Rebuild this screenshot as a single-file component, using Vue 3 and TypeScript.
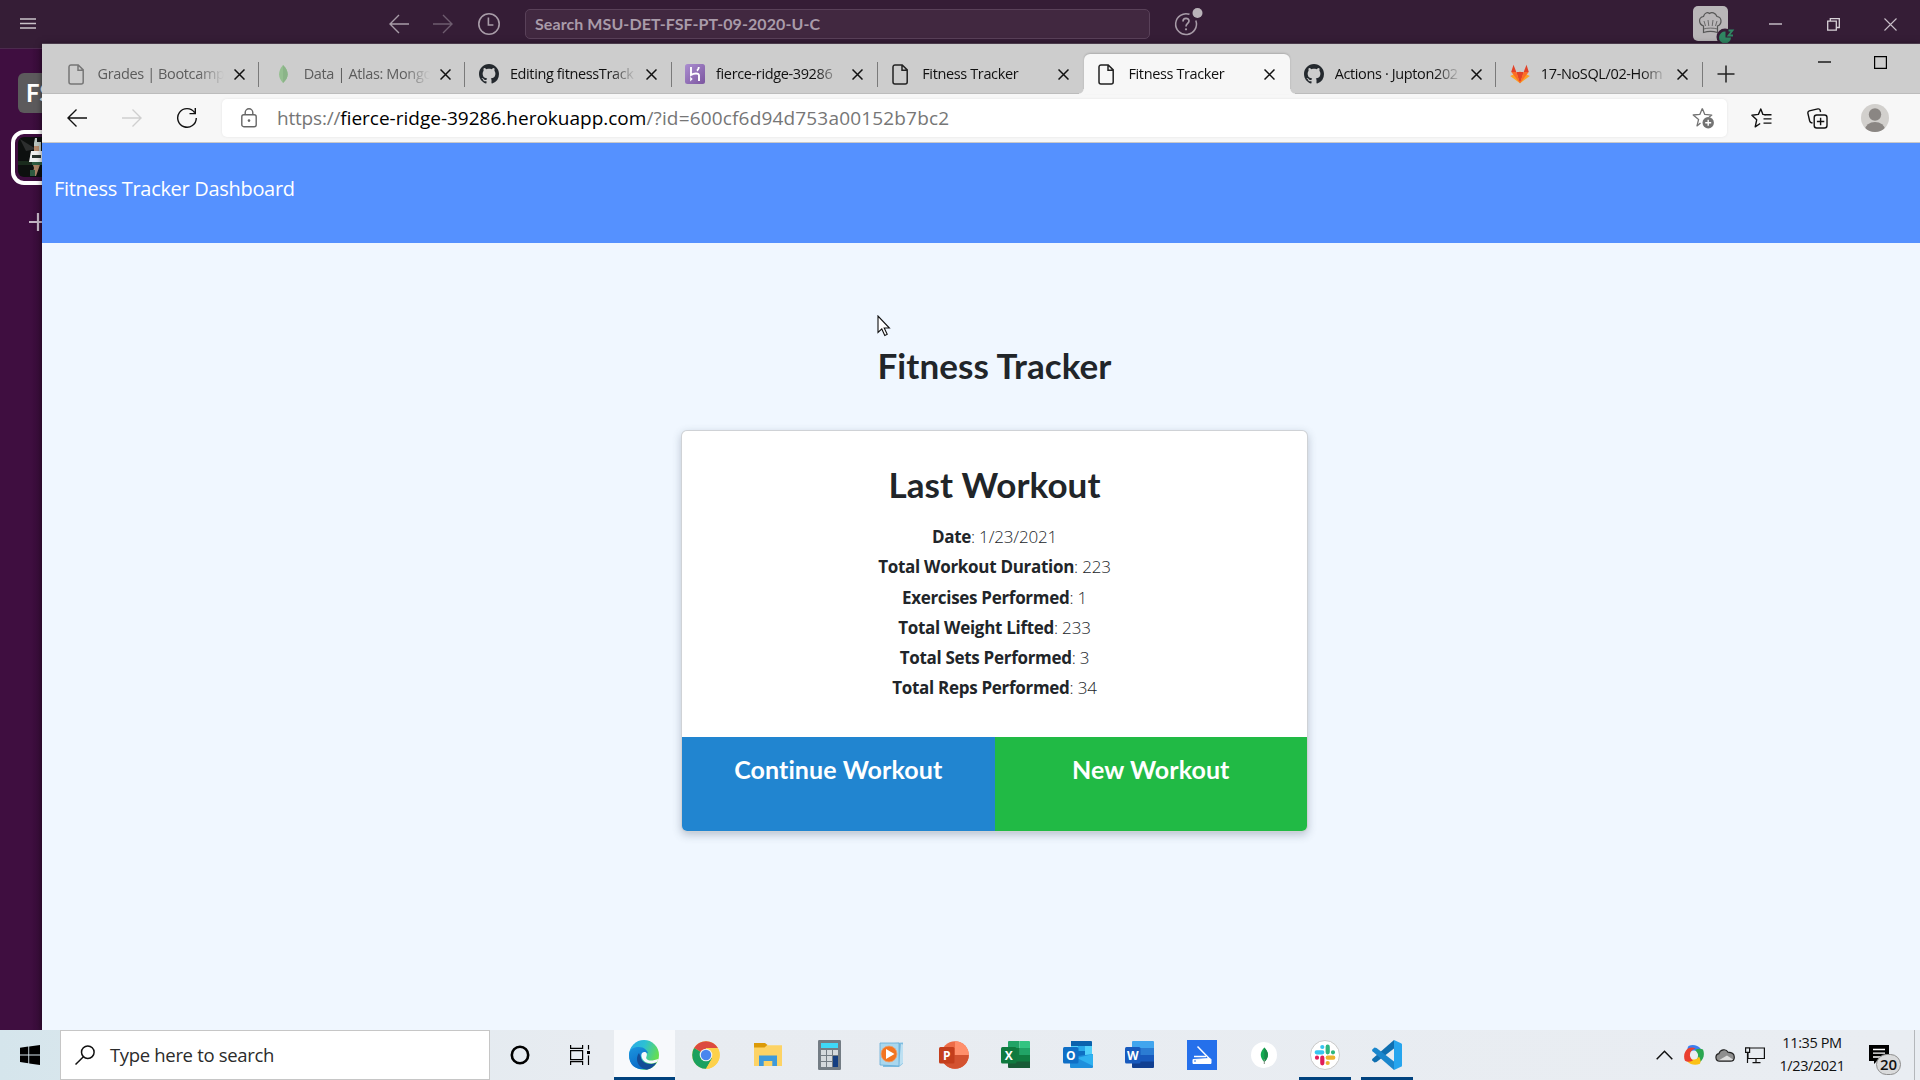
<script setup lang="ts">
interface Tab {
  title: string
  icon: 'page' | 'leaf' | 'github' | 'heroku' | 'gitlab'
  active?: boolean
  faded?: boolean
  noSep?: boolean
}

const tabs: Tab[] = [
  { title: 'Grades | Bootcamp', icon: 'page', faded: true },
  { title: 'Data | Atlas: Mongo', icon: 'leaf', faded: true },
  { title: 'Editing fitnessTrack', icon: 'github' },
  { title: 'fierce-ridge-39286', icon: 'heroku' },
  { title: 'Fitness Tracker', icon: 'page', noSep: true },
  { title: 'Fitness Tracker', icon: 'page', active: true, noSep: true },
  { title: 'Actions · Jupton202', icon: 'github' },
  { title: '17-NoSQL/02-Hom', icon: 'gitlab' },
]

const stats: [string, string][] = [
  ['Date', '1/23/2021'],
  ['Total Workout Duration', '223'],
  ['Exercises Performed', '1'],
  ['Total Weight Lifted', '233'],
  ['Total Sets Performed', '3'],
  ['Total Reps Performed', '34'],
]
</script>

<template>
  <div class="desktop">
    <!-- Slack window behind the browser -->
    <div class="slack">
      <header class="slack-bar">
        <svg class="burger" width="16" height="12" viewBox="0 0 16 12"><path d="M0 1h16M0 5.5h16M0 10h16" stroke="#c9c2c9" stroke-width="1.3" /></svg>
        <svg class="s-back" width="20" height="20" viewBox="0 0 20 20" fill="none" stroke="#a89ca8" stroke-width="1.4"><path d="M20 10H1M10 1L1 10l9 9" /></svg>
        <svg class="s-fwd" width="20" height="20" viewBox="0 0 20 20" fill="none" stroke="#6e5c6f" stroke-width="1.4"><path d="M0 10h19M10 1l9 9-9 9" /></svg>
        <svg class="s-clock" width="24" height="24" viewBox="0 0 24 24" fill="none" stroke="#a89ca8" stroke-width="1.6"><circle cx="12" cy="12" r="10.2" /><path d="M11.4 5.6V13h5" /></svg>
        <div class="s-search">Search MSU-DET-FSF-PT-09-2020-U-C</div>
        <svg class="s-help" width="32" height="32" viewBox="0 0 32 32" fill="none" stroke="#a89ca8" stroke-width="1.5">
          <path d="M15.500 8.300A10.400 10.400 0 1 0 21.800 14.500" />
          <path d="M9 15.400c0-4 6-4 6-.3 0 2.400-3 2.300-3 5.300" stroke-width="1.700" />
          <circle cx="12" cy="23.300" r="1.100" fill="#a89ca8" stroke="none" />
          <circle cx="23.500" cy="7" r="5" fill="#b9b3b9" stroke="none" />
        </svg>
        <div class="s-avatar">
          <svg width="44" height="40" viewBox="0 0 44 40">
            <g fill="none" stroke="#555" stroke-width="1.200" transform="translate(-.5 -3.500)">
              <path d="M11 23.500C6 21.500 5.500 15 11 14c1-4 4-4.500 6-3 2-1.500 6-1 7.500 3 5 .6 5.500 7.500 .5 9.500v6.500c-4-1.200-10-1.200-14 0z" />
              <path d="M11 26.500c4-1.200 10-1.200 14 0M15.500 17.500l.8 6M20.500 17.500l-.8 6M11.500 18.500l1.500 5M24.500 18.500l-1.500 5" stroke-width=".8" />
            </g>
            <circle cx="32" cy="31" r="8.500" fill="#351d36" />
            <path d="M32.500 25.500a6 6 0 1 0 5.500 6h-5.500z" fill="#2f8662" />
            <path d="M35.500 24.500h4l-4 5h4.500" fill="none" stroke="#2f8662" stroke-width="1.800" />
          </svg>
        </div>
        <svg class="s-min" width="13" height="2"><path d="M0 1h13" stroke="#d8d2d8" stroke-width="1.300" /></svg>
        <svg class="s-max" width="13" height="13" viewBox="0 0 13 13" fill="none" stroke="#d8d2d8" stroke-width="1.300"><path d="M.7 3.200h8.600v9H.7zM3.300 3V.7h9v8.800h-3" /></svg>
        <svg class="s-close" width="13" height="13" viewBox="0 0 13 13"><path d="M.5.5l12 12M12.500.5l-12 12" stroke="#c9bfc9" stroke-width="1.100" /></svg>
      </header>
      <aside class="slack-rail">
        <div class="ws">FS</div>
        <div class="ws-photo">
          <svg width="40" height="40" viewBox="0 0 40 40">
            <rect width="40" height="40" fill="#0d100f" />
            <path d="M2 2l16 10L8 14z" fill="#2c2e2e" />
            <path d="M0 24h40v4H0z" fill="#1a2b1d" />
            <path d="M17 1h2v4h4v9h-7V6z" fill="#b9c4bf" />
            <path d="M16 9h5v5h-5z" fill="#b48a6b" />
            <path d="M13 14h15v11H11z" fill="#f0f1f0" />
            <path d="M14 18h9v3h-9z" fill="#27332e" />
            <path d="M14 25h9l-5 14h-4l2-8z" fill="#a98365" />
            <path d="M14 25h10v3H14zM12 33h5v6h-5z" fill="#2f5c41" />
          </svg>
        </div>
        <svg class="ws-add" width="18" height="18" viewBox="0 0 18 18"><path d="M9 0v18M0 9h18" stroke="#c4b5c5" stroke-width="2.200" /></svg>
      </aside>
    </div>

    <!-- Browser window -->
    <div class="browser">
      <div class="tabstrip">
        <div v-for="(t, i) in tabs" :key="i" class="tab" :class="{ active: t.active, faded: t.faded, sep: !t.noSep }">
          <div class="tab-icon">
            <svg v-if="t.icon === 'page'" width="20" height="21" viewBox="0 0 20 21" fill="none" stroke="#222" stroke-width="1.500"><path d="M4 .9h7.200l5 5V18a2 2 0 0 1-2 2H4a2 2 0 0 1-2-2V2.900a2 2 0 0 1 2-2zM11 1v5.200h5.200" /></svg>
            <svg v-else-if="t.icon === 'leaf'" width="20" height="20" viewBox="0 0 20 20"><path d="M10 1c6 6 6.500 12 0 18C4.500 13 5 7 10 1z" fill="#5fb357" /><path d="M10 1c6 6 6.500 12 0 18z" fill="#4b9c45" /></svg>
            <svg v-else-if="t.icon === 'github'" width="20" height="20" viewBox="0 0 16 16"><path fill="#24292e" d="M8 0C3.580 0 0 3.580 0 8c0 3.540 2.290 6.530 5.470 7.590.4.070.55-.17.55-.38 0-.19-.01-.82-.01-1.490-2.010.37-2.530-.49-2.690-.94-.09-.23-.48-.94-.82-1.130-.28-.15-.68-.52-.01-.53.63-.01 1.080.58 1.230.82.72 1.210 1.870.87 2.330.66.070-.52.28-.87.51-1.070-1.780-.2-3.640-.89-3.640-3.950 0-.87.31-1.590.82-2.150-.08-.2-.36-1.020.08-2.120 0 0 .67-.21 2.200.82.64-.18 1.320-.27 2-.27s1.360.09 2 .27c1.530-1.040 2.200-.82 2.200-.82.44 1.100.16 1.920.08 2.120.51.56.82 1.270.82 2.150 0 3.070-1.870 3.750-3.650 3.950.29.25.54.73.54 1.480 0 1.070-.01 1.930-.01 2.200 0 .21.15.46.55.38A8.010 8.010 0 0 0 16 8c0-4.420-3.580-8-8-8z" /></svg>
            <svg v-else-if="t.icon === 'heroku'" width="20" height="20" viewBox="0 0 20 20"><defs><linearGradient id="hk" x1="0" y1="0" x2="1" y2="1"><stop offset="0" stop-color="#ab8ed0" /><stop offset="1" stop-color="#7b559f" /></linearGradient></defs><rect width="20" height="20" rx="2.500" fill="url(#hk)" /><path d="M6 3v8c2.500-1.500 8-2.500 8 .5V17M13.800 3c0 1.600-.7 2.800-1.800 3.800" fill="none" stroke="#fff" stroke-width="1.900" /><path d="M5.200 12.800v4.600l2.500-2.300z" fill="#fff" /></svg>
            <svg v-else width="20" height="20" viewBox="0 0 20 20"><path d="M10 19.200L.2 12 10 7.500l9.800 4.500z" fill="#fca326" /><path d="M10 19.200L6.300 8h7.400z" fill="#e24329" /><path d="M10 19.200L1.300 8h5zM10 19.200L18.700 8h-5z" fill="#fc6d26" /><path d="M3.500.8L1.200 8h5.100zM16.500.8L18.800 8h-5.100z" fill="#e24329" /></svg>
          </div>
          <div class="tab-title">{{ t.title }}</div>
          <svg class="tab-x" width="11" height="11" viewBox="0 0 11 11"><path d="M.5.5l10 10M10.500.5l-10 10" stroke="#111" stroke-width="1.500" /></svg>
        </div>
        <svg class="newtab" width="18" height="18" viewBox="0 0 18 18"><path d="M9 .5v17M.5 9h17" stroke="#222" stroke-width="1.500" /></svg>
        <svg class="b-min" width="13" height="2"><path d="M0 1h13" stroke="#000" stroke-width="1.300" /></svg>
        <svg class="b-max" width="13" height="13"><path d="M.6.6h11.800v11.800H.6z" fill="none" stroke="#000" stroke-width="1.200" /></svg>
      </div>

      <div class="toolbar">
        <svg class="t-back" width="20" height="18" viewBox="0 0 20 18" fill="none" stroke="#111" stroke-width="1.400"><path d="M20 9H1M9.500.6L1 9l8.500 8.400" /></svg>
        <svg class="t-fwd" width="20" height="18" viewBox="0 0 20 18" fill="none" stroke="#cfcfcf" stroke-width="1.400"><path d="M0 9h19M10.500.6L19 9l-8.500 8.400" /></svg>
        <svg class="t-reload" width="22" height="22" viewBox="0 0 22 22" fill="none" stroke="#111" stroke-width="1.400"><path d="M18.600 5.600A9.300 9.300 0 1 0 20.300 11M19.300 1v5.600h-5.800" /></svg>
        <div class="urlbar">
          <svg width="16" height="20" viewBox="0 0 16 20" fill="none" stroke="#666" stroke-width="1.400"><rect x=".8" y="6.700" width="14.400" height="12" rx="2" /><path d="M4.200 6.500V4.600a3.800 3.800 0 0 1 7.600 0v1.900" /><circle cx="8" cy="12.600" r="1.300" fill="#666" stroke="none" /></svg>
          <div class="url"><span>https://</span><b>fierce-ridge-39286.herokuapp.com</b><i>/?id=600cf6d94d753a00152b7bc2</i></div>
          <svg class="addfav" width="23" height="22" viewBox="0 0 23 22"><path d="M10.300 1.200l2.500 5.900 7 .7-2.800 2.200M8.500 15.700L5 18.600l1.600-6.500L1.200 7.700l6.600-.6 2.500-5.900" transform="translate(0 .3)" fill="none" stroke="#737373" stroke-width="1.300" stroke-linejoin="round" /><circle cx="16.200" cy="15.700" r="5.700" fill="#737373" /><path d="M16.200 12.700v6M13.200 15.700h6" stroke="#fff" stroke-width="1.400" /></svg>
        </div>
        <svg class="t-fav" width="21" height="20" viewBox="0 0 21 20" fill="none" stroke="#111" stroke-width="1.400" stroke-linejoin="round"><path d="M14.500 6.700l-2.600-.3L9.800 1 7.400 6.400l-6.500.8 4.800 4.600-1.500 7 5-3.300" /><path d="M13.500 6.700H20.500M12.500 10.900h8M12.500 15.100h8" /></svg>
        <svg class="t-coll" width="21" height="21" viewBox="0 0 21 21" fill="none" stroke="#111" stroke-width="1.400"><rect x="7.200" y="7" width="12.800" height="13" rx="2.500" /><path d="M13.600 9.800v7.400M9.900 13.500h7.400M5.500 15l-1-.2C3.500 14.500 3 14 2.700 13L.9 5.300c-.2-1.200.3-2 1.400-2.400l8.600-2c1.200-.2 2 .3 2.300 1.400l.4 1.700" /></svg>
        <svg class="t-user" width="28" height="28" viewBox="0 0 28 28"><defs><clipPath id="uc"><circle cx="14" cy="14" r="14" /></clipPath></defs><g clip-path="url(#uc)"><rect width="28" height="28" fill="#d2d0cd" /><circle cx="14" cy="10.500" r="6.200" fill="#8a8683" /><ellipse cx="14" cy="26" rx="10" ry="8" fill="#8a8683" /></g></svg>
      </div>

      <div class="page">
        <nav class="nav">Fitness Tracker Dashboard</nav>
        <main>
          <h1>Fitness Tracker</h1>
          <section class="card">
            <div class="card-body">
              <h2>Last Workout</h2>
              <div v-for="s in stats" :key="s[0]" class="stat"><strong>{{ s[0] }}</strong>: {{ s[1] }}</div>
            </div>
            <div class="buttons">
              <a class="blue">Continue Workout</a>
              <a class="green">New Workout</a>
            </div>
          </section>
        </main>
      </div>
    </div>

    <svg class="cursor" width="14" height="22" viewBox="0 0 14 22"><path d="M1 1v16.500l3.800-3.600 3 6.500 2.400-1.100-3-6.300h5.200z" fill="#fff" stroke="#111" stroke-width="1.100" /></svg>

    <footer class="taskbar">
      <div class="start"><svg width="20" height="20" viewBox="0 0 20 20"><path d="M0 2.800l8.300-1.200v7.900H0zM9.200 1.500L20 0v9.500H9.200zM0 10.400h8.300v7.900L0 17.100zM9.200 10.400H20V20L9.200 18.400z" /></svg></div>
      <div class="search">
        <svg width="20" height="20" viewBox="0 0 20 20" fill="none" stroke="#111" stroke-width="1.500"><circle cx="12.800" cy="7.200" r="6.300" /><path d="M8.400 11.800L.5 19.500" /></svg>
        <span>Type here to search</span>
      </div>
      <svg class="cortana" width="20" height="20" viewBox="0 0 20 20"><circle cx="10" cy="10" r="8.200" fill="none" stroke="#000" stroke-width="2.600" /></svg>
      <svg class="taskview" width="20" height="20" viewBox="0 0 20 20" fill="none" stroke="#000" stroke-width="1.200"><path d="M.6 0v3.400h12V0M.6 20v-3.400h12V20M.6 5.600h12v9H.6zM18.500 0v4.500M18.500 10.500V20" /><path d="M17 6h3v3h-3z" fill="#000" stroke="none" /></svg>

      <div class="apps">
        <div class="app current">
          <svg width="30" height="30" viewBox="0 0 30 30">
            <defs>
              <linearGradient id="eg1" x1="0" y1="0" x2="1" y2=".4"><stop offset="0" stop-color="#2aa7ea" /><stop offset=".5" stop-color="#2cc0d4" /><stop offset="1" stop-color="#66de50" /></linearGradient>
              <linearGradient id="eg2" x1="0" y1="0" x2=".5" y2="1"><stop offset="0" stop-color="#1c96de" /><stop offset="1" stop-color="#0868c6" /></linearGradient>
            </defs>
            <circle cx="15" cy="15" r="15" fill="url(#eg1)" />
            <path d="M0 15C0 9 5 7 9.500 7c6 0 9 3.500 9.500 6.500-3-2.500-8 0-7 5 1 4 5 7.500 12 5.500C20 31 0 33 0 15z" fill="url(#eg2)" />
            <path d="M10 13c-5 7 0 15.500 8 16.700 4-.6 8-4 9.500-7.200-5 2.500-14 2-15.800-5.500z" fill="#134d97" />
            <path d="M13 13c3-2.500 6 0 4.500 3.500-1.500 3 3 6 12.300 2.200L28 22c-6 3-13 1-15-4-.8-2-.8-3.800 0-5z" fill="#f7f9fc" />
            <path d="M28.300 21.500L31 18v5z" fill="#f7f9fc" />
          </svg>
        </div>
        <div class="app">
          <svg width="28" height="28" viewBox="0 0 28 28"><circle cx="14" cy="14" r="13.800" fill="#fdd14b" /><path d="M14 14L2.050 7.100A13.800 13.800 0 0 1 25.950 7.100H14z" fill="#dc4a40" /><path d="M2.050 7.100A13.800 13.800 0 0 0 14 27.800l6-10.400-6-3.400z" fill="#1aa15f" /><path d="M14 7.400h11.950A13.800 13.800 0 0 1 14 27.800l6-10.400z" fill="#fdd14b" /><circle cx="14" cy="14" r="6.300" fill="#f0f3f2" /><circle cx="14" cy="14" r="5.200" fill="#4a86ee" /></svg>
        </div>
        <div class="app">
          <svg width="28" height="24" viewBox="0 0 28 24"><path d="M0 0h11l2.500 2-2 3H0z" fill="#dc9a08" /><path d="M0 4.500h10.500L13 2.300h15V23H0z" fill="#fdd365" /><path d="M5 23V12.500h18V23h-4.700v-5H9.700v5z" fill="#3e9adb" /></svg>
        </div>
        <div class="app">
          <svg width="24" height="30" viewBox="0 0 24 30"><rect width="23" height="30" rx="1.200" fill="#737c84" /><path d="M3 3h17v5H3z" fill="#3ed8f7" /><path d="M3 10h5v5H3zM9 10h5v5H9zM15 10h5v5h-5zM3 16h5v5H3zM9 16h5v5H9zM3 22h5v5H3zM9 22h5v5H9z" fill="#d4d9dd" /><path d="M15 16h5v11h-5z" fill="#143e82" /></svg>
        </div>
        <div class="app">
          <svg width="26" height="26" viewBox="0 0 26 26"><path d="M6 1.500l18-1v21l-4 3.500H4z" fill="#7fbde0" /><path d="M22 2l2 .5V21l-4 3z" fill="#bde0f2" /><path d="M1 1h19v23L1 23z" fill="#a9d7ee" stroke="#62abd6" stroke-width=".8" /><circle cx="10" cy="12" r="8" fill="#f37521" stroke="#e9a376" stroke-width=".8" /><path d="M7 7l8.500 5L7 17z" fill="#fff" /></svg>
        </div>
        <div class="app">
          <svg width="30" height="28" viewBox="0 0 30 28"><circle cx="16" cy="14" r="13.800" fill="#ed6c47" /><path d="M16 .2A13.800 13.800 0 0 1 29.800 14H16z" fill="#ff8f6b" /><path d="M2.200 14h27.600A13.800 13.800 0 0 1 2.200 14z" fill="#d35230" /><rect x="0" y="6" width="15.500" height="16.500" rx="1.500" fill="#c43e1c" /><text x="7.700" y="18.500" class="letter">P</text></svg>
        </div>
        <div class="app">
          <svg width="30" height="28" viewBox="0 0 30 28"><path d="M8 0h10.500v14H7V1a1 1 0 0 1 1-1z" fill="#21a366" /><path d="M18.500 0H28a1 1 0 0 1 1 1v13H18.500z" fill="#33c481" /><path d="M18.500 7H29v7H18.500z" fill="#21a366" /><path d="M7 7h11.500v14H7zM18.500 14H29v7H18.500z" fill="#107c41" /><path d="M7 20.500h22V27H8a1 1 0 0 1-1-1z" fill="#185c37" /><rect x="0" y="6" width="15.500" height="16.500" rx="1.500" fill="#0f7a3f" /><text x="7.700" y="18.500" class="letter">X</text></svg>
        </div>
        <div class="app">
          <svg width="30" height="28" viewBox="0 0 30 28"><path d="M8 0h20a1 1 0 0 1 1 1v5H8z" fill="#0a62ad" /><path d="M8 5h7v9H8zM22 5h7v9h-7z" fill="#50d0fa" /><path d="M15 5h7v9h-7z" fill="#28a8ea" /><path d="M15 10h7v6h-7z" fill="#0e6fc2" /><path d="M7 16l23-3v13a1 1 0 0 1-1 1H8a1 1 0 0 1-1-1z" fill="#1f8fdc" /><path d="M30 13v12L14 17z" fill="#2fb1f0" /><rect x="0" y="6" width="15.500" height="16.500" rx="1.500" fill="#0f6fc6" /><text x="7.700" y="18.500" class="letter">O</text></svg>
        </div>
        <div class="app">
          <svg width="30" height="28" viewBox="0 0 30 28"><path d="M8 0h20a1 1 0 0 1 1 1v6H7V1a1 1 0 0 1 1-1z" fill="#41a5ee" /><path d="M7 7h22v7H7z" fill="#2b7cd3" /><path d="M7 14h22v7H7z" fill="#185abd" /><path d="M7 20.500h22V26a1 1 0 0 1-1 1H8a1 1 0 0 1-1-1z" fill="#103f91" /><rect x="0" y="6" width="15.500" height="16.500" rx="1.500" fill="#185abd" /><text x="7.700" y="18.500" class="letter">W</text></svg>
        </div>
        <div class="app">
          <svg width="30" height="30" viewBox="0 0 30 30"><rect width="30" height="30" fill="#2570eb" /><path d="M10.500 6.500l12.700 13" stroke="#fff" stroke-width="1.500" /><path d="M7 16.500h12" stroke="#fff" stroke-width="1.500" /><path d="M6 19.500L23 18.500l1 1v4H6z" fill="#fff" stroke="#fff" stroke-width="1" /><path d="M7 21h2" stroke="#2570eb" /></svg>
        </div>
        <div class="app">
          <svg width="26" height="26" viewBox="0 0 26 26"><circle cx="13" cy="13" r="13" fill="#fff" /><path d="M13.300 5.500c4.500 4.500 5.200 9.500 0 14.500-5-5-4.500-10 0-14.500z" fill="#13aa52" /><path d="M13.300 5.500c4.500 4.500 5.200 9.500 0 14.500z" fill="#1a8c48" /><path d="M13.300 17v5" stroke="#7d8f7f" /></svg>
        </div>
        <div class="app open">
          <svg width="30" height="30" viewBox="0 0 30 30"><circle cx="15" cy="15" r="14.500" fill="#fff" stroke="#c9c9c9" /><g stroke-width="4.200" stroke-linecap="round"><path d="M6.700 12.300h5.600M12.300 7h0" stroke="#36c5f0" /><path d="M17.700 6.700v5.600M23 12.300h0" stroke="#2eb67d" /><path d="M17.700 17.700h5.600M17.700 23h0" stroke="#ecb22e" /><path d="M12.300 17.700v5.600M7 17.700h0" stroke="#e01e5a" /></g></svg>
        </div>
        <div class="app open">
          <svg width="30" height="30" viewBox="0 0 30 30"><path d="M22 0v8.500L4.500 22 2.500 22.500.3 20.500c-.4-.6-.3-1.200.2-1.700z" fill="#0f6fb0" /><path d="M22 30v-8.500L4.500 8 2.500 7.500.3 9.500c-.4.6-.3 1.200.2 1.700z" fill="#1a86cc" /><path d="M22 0l7 3.200a1.500 1.500 0 0 1 1 1.400v20.800a1.500 1.500 0 0 1-1 1.400L22 30z" fill="#26a5ee" /></svg>
        </div>
      </div>

      <div class="tray">
        <svg class="chev" width="17" height="10" viewBox="0 0 17 10"><path d="M.7 9.200l7.800-8 7.800 8" fill="none" stroke="#111" stroke-width="1.500" /></svg>
        <svg class="swirl" width="20" height="20" viewBox="0 0 20 20">
          <path d="M4.500 1C9-1 14 .5 16.500 3.500 18 6 18 9 17 11c-1-4-4-6-8-5.500C7 6 5 7.500 4.500 9 3 6 3 3 4.500 1z" fill="#3c7ff0" />
          <path d="M19 4.500c2 5 .5 10-3 12.500-3 1.500-5.500 1-7.500 0 4-1 6-4 5.500-7.500C13.500 7.500 12 6 11 5c3-1.500 6-1.500 8-.5z" fill="#2aa650" />
          <path d="M16 18.800c-4.500 2-9.500 1-12.500-2C2 14.500 2 12 3 9.500c1 3.500 4 5.500 7.500 5C13 14 14.500 12.500 15 11.500c1.500 2.500 2 5 1 7.300z" fill="#fbc116" />
          <path d="M1 15.800C-1 11 .5 6 4 3.500c2.500-1.500 5.500-1 7.500 0C7.500 4.500 5.500 7.500 6 11c.5 2 2 3.500 3 4.500-3 1.500-6 1.500-8 .3z" fill="#ea4030" />
          <circle cx="10" cy="10" r="3.200" fill="#e9edf2" />
        </svg>
        <svg class="cloud" width="20" height="14" viewBox="0 0 20 14"><path d="M4.500 13.200a3.800 3.800 0 0 1-.6-7.500C5 1.500 11 .2 13 4.200c4 .2 6.300 2.200 6.300 5 0 2.500-1.500 4-3.800 4z" fill="#8f8f8f" /><path d="M3 12.700L12 7.500l6.500 4.300-2.500 1z" fill="#dedede" /><path d="M4.500 13.200a3.800 3.800 0 0 1-.6-7.500C5 1.500 11 .2 13 4.200c4 .2 6.300 2.200 6.300 5 0 2.500-1.500 4-3.800 4z" fill="none" stroke="#222" stroke-width="1.200" /></svg>
        <svg class="net" width="20" height="17" viewBox="0 0 20 17" fill="none" stroke="#111" stroke-width="1.200"><path d="M5 1h14.400v10.500H3V6M11 11.500v4M7.500 15.600h8M.6.8h4v4.600h-4zM2.500 5.500V16" /></svg>
        <div class="clock"><div>11:35 PM</div><div>1/23/2021</div></div>
        <div class="action">
          <svg width="20" height="20" viewBox="0 0 20 20"><path d="M0 0h20v16H8l-3 3v-3H0z" /><path d="M4 4.500h12M4 8.200h12M4 12h8" stroke="#fff" stroke-width="1.300" /></svg>
          <span class="count">20</span>
        </div>
        <div class="peek"></div>
      </div>
    </footer>
  </div>
</template>

<style>
html, body { margin: 0; overflow: hidden; }
</style>

<style scoped>
.desktop { position: relative; width: 1920px; height: 1080px; overflow: hidden; display: flex; flex-direction: column; font-family: "Open Sans", "Noto Sans", sans-serif; background: #3f0e40; }
.desktop * { box-sizing: border-box; }
svg { display: block; flex: none; }

.slack { flex: 1; min-height: 0; display: flex; flex-direction: column; }
.slack-bar { height: 49px; background: #351d36; border-bottom: 1px solid #4c2a4e; display: flex; align-items: flex-start; }
.burger { margin: 18px 0 0 20px; }
.s-back { margin: 14px 0 0 353px; }
.s-fwd { margin: 14px 0 0 24px; }
.s-clock { margin: 12px 0 0 24px; }
.s-search { margin: 9px 0 0 24px; width: 625px; height: 30px; border: 1px solid #594159; border-radius: 5px; background: #412840; color: #a99ba9; font: 700 16px/28px Lato, sans-serif; letter-spacing: .08px; padding-left: 9px; }
.s-help { margin: 6px 0 0 24px; }
.s-avatar { margin: 6px 0 0 487px; width: 35px; height: 35px; border-radius: 5px; background: #b9b6b8; }
.s-min { margin: 23px 0 0 41px; }
.s-max { margin: 18px 0 0 45px; }
.s-close { margin: 18px 0 0 44px; }
.slack-rail { flex: 1; display: flex; flex-direction: column; background: linear-gradient(90deg, #3f0e40 30px, #360c37 42px); }
.ws { margin: 24px 0 0 18px; width: 40px; height: 40px; border-radius: 6px; background: #5c5a5c; color: #fff; font: 700 24px/39px Lato, sans-serif; padding-left: 8px; }
.ws-photo { margin: 17px 0 0 11px; width: 54px; height: 55px; border: 4px solid #fff; border-radius: 13px; padding: 3px; }
.ws-photo svg { border-radius: 6px; }
.ws-add { margin: 28px 0 0 29px; }

.browser { position: absolute; left: 42px; top: 44px; width: 1878px; height: 986px; display: flex; flex-direction: column; box-shadow: 0 -1px 0 #4a3a4b, 0 0 6px rgba(0, 0, 0, .5); }
.tabstrip { height: 50px; background: #cdcdcd; box-shadow: inset 0 -1px #bcbcbc; padding-left: 11px; display: flex; align-items: flex-start; }
.tab { position: relative; width: 206.200px; height: 40px; margin-top: 10px; padding-left: 13.500px; display: flex; align-items: center; flex: none; }
.tab.sep::after { content: ""; position: absolute; right: 0; top: 8px; height: 25px; width: 1px; background: #7a7a7a; }
.tab.active { background: #f7f7f7; border-radius: 6px 6px 0 0; box-shadow: 0 -1px 2px rgba(0, 0, 0, .16); }
.tab.active::before, .tab.active::after { content: ""; position: absolute; bottom: 0; width: 5px; height: 5px; }
.tab.active::before { left: -5px; background: radial-gradient(circle at 0 0, #cdcdcd 4px, #f7f7f7 5px); }
.tab.active::after { right: -5px; background: radial-gradient(circle at 100% 0, #cdcdcd 4px, #f7f7f7 5px); }
.tab-icon { width: 20px; }
.tab-title { margin: -1px 0 0 11px; width: 126px; white-space: nowrap; font-size: 14.500px; letter-spacing: -.37px; line-height: 22px; color: #111; -webkit-mask-image: linear-gradient(90deg, #000 100px, transparent 126px); mask-image: linear-gradient(90deg, #000 100px, transparent 126px); }
.faded .tab-icon { opacity: .5; }
.faded .tab-title { color: #5c5c5c; }
.tab-x { margin: 1px 0 0 10px; }
.newtab { margin: 21px 0 0 14px; }
.b-min { margin: 17px 0 0 83px; }
.b-max { margin: 12px 0 0 43px; }

.toolbar { height: 49px; background: #f7f7f7; border-bottom: 1px solid #c9c9c9; display: flex; align-items: center; padding: 0 31px 0 25px; }
.t-fwd { margin-left: 35px; }
.t-reload { margin-left: 34px; }
.urlbar { margin-left: 24px; width: 1506px; height: 38px; border-radius: 5px; background: #fff; box-shadow: 0 0 3px rgba(0, 0, 0, .08); display: flex; align-items: center; padding: 0 12px 0 19px; }
.url { flex: 1; margin: 0 0 0 20px; font-size: 19px; color: #767676; white-space: nowrap; }
.url span { letter-spacing: -.2px; }
.url b { font-weight: 400; color: #000; }
.url i { font-style: normal; letter-spacing: .17px; }
.t-fav { margin-left: 24px; }
.t-coll { margin-left: 35px; }
.t-user { margin-left: 33px; }

.page { flex: 1; background: #f0f7ff; display: flex; flex-direction: column; }
.nav { height: 100px; background: #5591ff; color: #fff; font-size: 20px; letter-spacing: -.31px; line-height: 91px; padding-left: 12px; }
main { display: flex; flex-direction: column; align-items: center; padding-left: 27px; }
h1, h2 { margin: 0; font: 700 35px/44px Lato, sans-serif; color: #212529; letter-spacing: .08px; }
h1 { margin-top: 100px; }
.card { margin-top: 44px; width: 625px; height: 400px; border-radius: 5px; overflow: hidden; background: #fff; display: flex; flex-direction: column; box-shadow: 0 0 0 1px #cfd2d6, 0 3px 9px 1px rgba(60, 75, 100, .3); }
.card-body { flex: 1; padding-top: 31px; text-align: center; color: #212529; }
.card-body h2 { margin-bottom: 16px; }
.stat { font-size: 17px; font-weight: 350; line-height: 30.300px; letter-spacing: -.17px; }
.stat strong { font-weight: 700; letter-spacing: -.3px; }
.buttons { display: flex; height: 94px; }
.buttons a { flex: 1; text-align: center; color: #fff; font: 700 25px/30px Lato, sans-serif; letter-spacing: .1px; padding-top: 17px; }
.blue { background: #2185d0; }
.green { background: #21ba45; }
.cursor { position: absolute; left: 877px; top: 315px; }

.taskbar { position: relative; height: 50px; display: flex; align-items: center; background: linear-gradient(90deg, #d5e5ec 0, #e0e9ef 300px, #e8ecf1 600px, #e9edf2); }
.start { width: 60px; height: 50px; display: flex; align-items: center; padding-left: 20px; }
.search { width: 430px; height: 50px; background: #fff; border: 1px solid #c6c6c6; display: flex; align-items: center; padding-left: 14px; }
.search span { margin: -2px 0 0 15px; font-size: 18.500px; letter-spacing: -.33px; color: #2b2b2b; }
.cortana { margin-left: 20px; }
.taskview { margin-left: 40px; }
.apps { display: flex; margin-left: 23.500px; height: 50px; }
.app { position: relative; width: 61.920px; display: flex; align-items: center; justify-content: center; }
.app:nth-child(-n+5) svg { margin-left: -1px; }
.app.current { background: #f7f9fc; }
.app.current::after, .app.open::after { content: ""; position: absolute; left: 5px; right: 5px; bottom: 0; height: 3px; background: #00427e; }
.app.current::after { left: 0; right: 0; }
.letter { fill: #fff; font: 700 12px "Open Sans", sans-serif; text-anchor: middle; }
.tray { margin-left: auto; display: flex; align-items: center; height: 50px; }
.swirl { margin-left: 11px; }
.cloud { margin-left: 11px; }
.net { margin-left: 10px; }
.clock { width: 94px; margin-top: -2px; text-align: center; font-size: 14.500px; line-height: 23px; letter-spacing: -.4px; color: #111; }
.action { position: relative; width: 55px; padding-left: 10px; }
.count { position: absolute; left: 17px; top: 9px; width: 25px; height: 21px; border: 1px solid #8d8d8d; border-radius: 11px; background: #d9dadb; font-size: 15px; font-weight: 600; line-height: 19px; text-align: center; color: #111; }
.peek { width: 6px; height: 50px; border-left: 1px solid #b4b7bb; }
</style>
